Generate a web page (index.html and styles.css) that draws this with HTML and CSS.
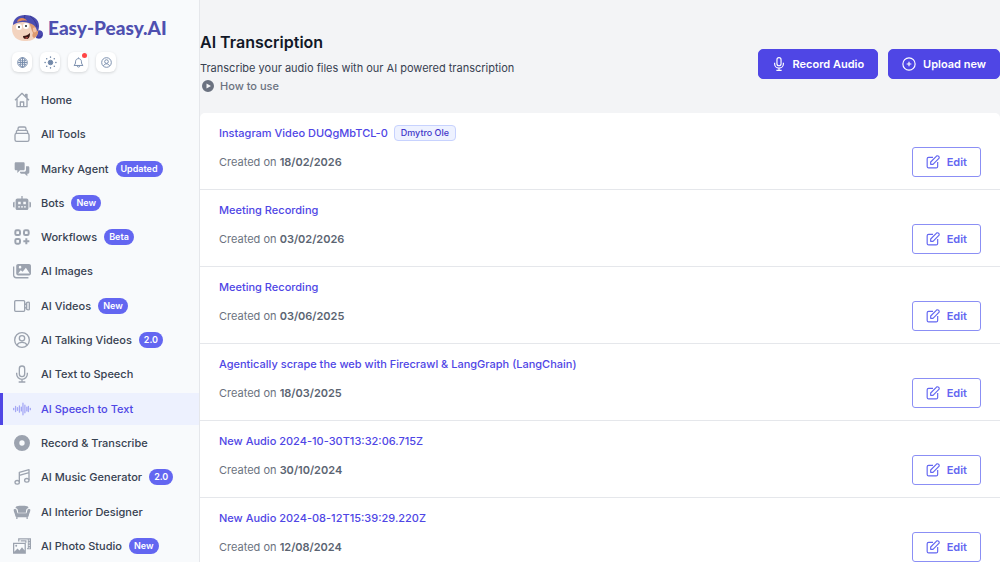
FILE: index.html
```html
<!DOCTYPE html>
<html lang="en">
<head>
  <meta charset="utf-8">
  <meta name="viewport" content="width=device-width, initial-scale=1">
  <title>AI Transcription</title>
  <link rel="stylesheet" href="styles.css">
</head>
<body>
  <div class="layout">
    <aside class="sidebar">
      <a class="logo" href="#">
        <svg class="logo-face" viewBox="0 0 32 28" aria-hidden="true">
          <path d="M24 17c4-2 7 0 7 3 0 4-3 6-7 4z" fill="#4a49b0"/>
          <path d="M25 23c2 1 4 0 5-2" stroke="#37358f" fill="none"/>
          <path d="M2 9C5 6 20 5 25 12c2 3 1 9-2 12-3 3-7 3-11 3C5 27 0 22 0 15c0-3 0-4 2-6z" fill="#f3d3bf"/>
          <path d="M17 9c4 0 8 2 9 5 1 5-1 9-4 10-2-1-2-3-1-5-2-3-2-7-4-10z" fill="#dd9a70"/>
          <path d="M21 14c3-2 5 0 4 2-1 3-3 3-4 1z" fill="#f6c2a2"/>
          <path d="M1 11C1 5 6 1 13 1c8 0 14 4 14 11 0 3-1 5-2 5-1-5-4-7-8-8C11 7 5 8 1 11z" fill="#4c4db1"/>
          <path d="M13 1c-1 2-1 4 0 6M18 2c3 2 6 6 7 11" stroke="#383991" fill="none"/>
          <path d="M5 8c1-5 8-5 10-1-3-1-7 0-10 1z" fill="#e58a55"/>
          <ellipse cx="7" cy="13" rx="3" ry="3" fill="#fff"/>
          <ellipse cx="14" cy="12" rx="3" ry="3" fill="#fff"/>
          <circle cx="7" cy="13" r="1" fill="#222"/>
          <circle cx="14" cy="12" r="1" fill="#222"/>
          <path d="M11 22c3 0 5-1 7-3 0 4-1 6-4 6-2 0-3-1-3-3z" fill="#3a1714"/>
          <path d="M13 24c1-1 3-1 3-1-1 2-2 2-3 1z" fill="#e5635c"/>
        </svg>
        <span>Easy-Peasy.AI</span>
      </a>

      <div class="tools">
        <button class="tool" type="button" aria-label="Language">
          <svg class="icon" viewBox="0 0 24 24"><circle cx="12" cy="12" r="10.500"/><ellipse cx="12" cy="12" rx="5" ry="10.500"/><path d="M12 2v20M2 12h20M4 7c4 2 12 2 16 0M4 17c4-2 12-2 16 0"/></svg>
        </button>
        <button class="tool" type="button" aria-label="Theme">
          <svg class="icon" viewBox="0 0 24 24"><circle cx="12" cy="12" r="5" fill="currentColor"/><path stroke-width="3" stroke-linecap="round" d="M12 0v.5M12 23.500v.5M0 12h.5M23.500 12h.5M3.600 3.600l.3.3M20.100 20.100l.3.3M3.600 20.400l.3-.3M20.100 3.900l.3-.3"/></svg>
        </button>
        <button class="tool" type="button" aria-label="Notifications">
          <svg class="icon" viewBox="0 0 24 24"><path d="M12 1v2M12 3.500c-4 0-6.500 3-6.500 7 0 4-1 6-3.500 8h20c-2.500-2-3.500-4-3.500-8 0-4-2.500-7-6.500-7zM9 19c0 4 6 4 6 0"/></svg>
          <span class="dot"></span>
        </button>
        <button class="tool" type="button" aria-label="Account">
          <svg class="icon" viewBox="0 0 24 24"><circle cx="12" cy="12" r="10.500"/><circle cx="12" cy="10" r="4"/><path d="M5.500 19c1.500-3 4-4 6.500-4s5 1 6.500 4"/></svg>
        </button>
      </div>

      <nav class="menu">
        <a class="item" href="#">
          <svg class="icon" viewBox="0 0 24 24"><path d="M1.500 12.500L12 2l10.500 10.500M4.500 10v12h15V10M9.500 22v-7h5v7M17.500 7V3.500h2V9"/></svg>
          Home
        </a>
        <a class="item" href="#">
          <svg class="icon" viewBox="0 0 24 24"><rect x="1.500" y="11" width="21" height="12" rx="2.500"/><path d="M3.500 11V9c0-1.500 1-2.500 2.500-2.500h12c1.500 0 2.500 1 2.500 2.500v2M6 6.500V4c0-1.500 1-2.500 2.500-2.500h7c1.500 0 2.500 1 2.500 2.500v2.500"/></svg>
          All Tools
        </a>
        <a class="item" href="#">
          <svg class="icon solid" viewBox="0 0 24 24"><path d="M3 2h11c1.200 0 2 .8 2 2v8c0 1.200-.8 2-2 2H9l-4 4v-4H3c-1.200 0-2-.8-2-2V4c0-1.200.8-2 2-2z"/><path d="M18 8h3c1.200 0 2 .8 2 2v7c0 1.200-.8 2-2 2h-1v4l-4-4h-5c-1.200 0-2-.8-2-2v-1h6c2 0 3-1 3-3z"/></svg>
          Marky Agent <span class="badge">Updated</span>
        </a>
        <a class="item" href="#">
          <svg class="icon solid" viewBox="0 0 28 24"><path fill-rule="evenodd" d="M13 1h2v4h6c1.700 0 3 1.300 3 3v12c0 1.700-1.300 3-3 3H7c-1.700 0-3-1.300-3-3V8c0-1.700 1.300-3 3-3h6zM8 10v4h4v-4zm8 0v4h4v-4zM8 17v2h3v-2zm4.500 0v2h3v-2zm4.500 0v2h3v-2z"/><path d="M0 12c0-1 1-2 2.500-2v9C1 19 0 18 0 17zM28 12c0-1-1-2-2.500-2v9c1.500 0 2.500-1 2.500-2z"/></svg>
          Bots <span class="badge">New</span>
        </a>
        <a class="item" href="#">
          <svg class="icon thick" viewBox="0 0 24 24"><rect x="2" y="2" width="7" height="7" rx="2"/><rect x="15" y="2" width="7" height="7" rx="2"/><rect x="2" y="15" width="7" height="7" rx="2"/><path d="M18.500 14v9M14 18.500h9"/></svg>
          Workflows <span class="badge">Beta</span>
        </a>
        <a class="item" href="#">
          <svg class="icon solid" viewBox="0 0 28 24"><path fill-rule="evenodd" d="M8 1h17c1.700 0 3 1.300 3 3v12c0 1.700-1.300 3-3 3H8c-1.700 0-3-1.300-3-3V4c0-1.700 1.300-3 3-3zm3 3a2 2 0 100 4 2 2 0 000-4zM8 16h18l-6-9-5 6-3-2z"/><path d="M0 5h2v13c0 2 1 3.500 3.500 3.500H24v2H5c-3 0-5-2-5-5z"/></svg>
          AI Images
        </a>
        <a class="item" href="#">
          <svg class="icon" viewBox="0 0 24 24"><rect x="1" y="4" width="15" height="16" rx="1.500"/><path d="M16 10l3-1.500V7c1-1 4-1 4 0v10c0 1-3 1-4 0v-1.500L16 14M19 8.500v7"/></svg>
          AI Videos <span class="badge">New</span>
        </a>
        <a class="item" href="#">
          <svg class="icon" viewBox="0 0 24 24"><circle cx="12" cy="12" r="11"/><circle cx="12" cy="9.500" r="4"/><path d="M4.500 19.500c1.500-3 4.500-4 7.500-4s6 1 7.500 4"/></svg>
          AI Talking Videos <span class="badge">2.0</span>
        </a>
        <a class="item" href="#">
          <svg class="icon" viewBox="0 0 24 24"><rect x="8" y="0" width="8" height="16" rx="4"/><path d="M4 10v2c0 4.500 3.500 8 8 8s8-3.500 8-8v-2M12 20v4M7 24h10"/></svg>
          AI Text to Speech
        </a>
        <a class="item active" href="#" aria-current="page">
          <svg class="icon" viewBox="0 0 28 24"><path stroke-width="2" stroke-linecap="round" d="M1 11v2M4 8v8M7 10v4M10 7v10M13 9v6M15.500 3v18M18.500 6v12M21.500 9v6M24 8v8M27 11v2"/></svg>
          AI Speech to Text
        </a>
        <a class="item" href="#">
          <svg class="icon solid" viewBox="0 0 24 24"><path fill-rule="evenodd" d="M12 0a12 12 0 100 24 12 12 0 000-24zm0 8a4 4 0 110 8 4 4 0 010-8z"/></svg>
          Record &amp; Transcribe
        </a>
        <a class="item" href="#">
          <svg class="icon" viewBox="0 0 24 24"><path d="M8 20V5l14.500-4v16M8 9.500l14.500-4"/><ellipse cx="4.800" cy="20" rx="3.300" ry="2.800"/><ellipse cx="19.200" cy="17" rx="3.300" ry="2.800"/></svg>
          AI Music Generator <span class="badge">2.0</span>
        </a>
        <a class="item" href="#">
          <svg class="icon solid" viewBox="0 0 28 24"><path d="M6 3c5-1 11-1 16 0 1.500.3 2 1.500 2 3-2 0-3 1-3.500 3L20 13H8L7.500 9C7 7 6 6 4 6c0-1.500.5-2.700 2-3z"/><path d="M1 9c0-2 4-2 4.500 0L7 14h14l1.500-5c.5-2 4.500-2 4.500 0 0 3-2 5-2.500 9-.2 1-.5 1.500-1.500 1.500V23h-2v-3H7v3H5v-3.500c-1 0-1.300-.5-1.500-1.500C3 14 1 12 1 9z"/></svg>
          AI Interior Designer
        </a>
        <a class="item" href="#">
          <svg class="icon solid" viewBox="0 0 28 24"><path fill-rule="evenodd" d="M0 7h20v17H0zm2 2v12l5-5 3 3 4-5 4 5V9zm3 1a1.500 1.500 0 100 3 1.500 1.500 0 000-3z"/><path fill-rule="evenodd" d="M8 0h20v17h-6v-2h1V2H10v3H8zm16.500 2v2H26V2zm0 4v2H26V6zm0 4v2H26v-2zm0 4v2H26v-2zM12 3h9v4h-2V5h-7z"/></svg>
          AI Photo Studio <span class="badge">New</span>
        </a>
      </nav>
    </aside>

    <main class="main">
      <header class="header">
        <div class="intro">
          <h1>AI Transcription</h1>
          <p>Transcribe your audio files with our AI powered transcription</p>
          <a class="how" href="#">
            <svg class="icon solid" viewBox="0 0 24 24"><path fill-rule="evenodd" d="M12 0a12 12 0 100 24 12 12 0 000-24zM9 7l9 5-9 5z"/></svg>
            How to use
          </a>
        </div>
        <div class="actions">
          <button class="btn" type="button">
            <svg class="icon" viewBox="0 0 24 24"><rect x="8.500" y="1" width="7" height="14" rx="3.500"/><path d="M4.500 10v2c0 4 3.300 7 7.500 7s7.500-3 7.500-7v-2M12 19v4M7.500 23h9"/></svg>
            Record Audio
          </button>
          <button class="btn" type="button">
            <svg class="icon" viewBox="0 0 24 24"><circle cx="12" cy="12" r="10.500"/><path d="M12 8v8M8 12h8"/></svg>
            Upload new
          </button>
        </div>
      </header>

      <ul class="list">
        <li class="row">
          <div class="info">
            <div class="title"><a href="#">Instagram Video DUQgMbTCL-0</a> <span class="tag">Dmytro Ole</span></div>
            <p>Created on <time>18/02/2026</time></p>
          </div>
          <button class="edit" type="button">
            <svg class="icon" viewBox="0 0 24 24"><path d="M12 4H4.500C3 4 2 5 2 6.500v13C2 21 3 22 4.500 22h13c1.500 0 2.500-1 2.500-2.500V12M8 16v-4L18.500 1.500c2-1 5 1.500 4 4L12 16z"/></svg>
            Edit
          </button>
        </li>
        <li class="row">
          <div class="info">
            <div class="title"><a href="#">Meeting Recording</a></div>
            <p>Created on <time>03/02/2026</time></p>
          </div>
          <button class="edit" type="button">
            <svg class="icon" viewBox="0 0 24 24"><path d="M12 4H4.500C3 4 2 5 2 6.500v13C2 21 3 22 4.500 22h13c1.500 0 2.500-1 2.500-2.500V12M8 16v-4L18.500 1.500c2-1 5 1.500 4 4L12 16z"/></svg>
            Edit
          </button>
        </li>
        <li class="row">
          <div class="info">
            <div class="title"><a href="#">Meeting Recording</a></div>
            <p>Created on <time>03/06/2025</time></p>
          </div>
          <button class="edit" type="button">
            <svg class="icon" viewBox="0 0 24 24"><path d="M12 4H4.500C3 4 2 5 2 6.500v13C2 21 3 22 4.500 22h13c1.500 0 2.500-1 2.500-2.500V12M8 16v-4L18.500 1.500c2-1 5 1.500 4 4L12 16z"/></svg>
            Edit
          </button>
        </li>
        <li class="row">
          <div class="info">
            <div class="title"><a href="#">Agentically scrape the web with Firecrawl &amp; LangGraph (LangChain)</a></div>
            <p>Created on <time>18/03/2025</time></p>
          </div>
          <button class="edit" type="button">
            <svg class="icon" viewBox="0 0 24 24"><path d="M12 4H4.500C3 4 2 5 2 6.500v13C2 21 3 22 4.500 22h13c1.500 0 2.500-1 2.500-2.500V12M8 16v-4L18.500 1.500c2-1 5 1.500 4 4L12 16z"/></svg>
            Edit
          </button>
        </li>
        <li class="row">
          <div class="info">
            <div class="title"><a href="#">New Audio 2024-10-30T13:32:06.715Z</a></div>
            <p>Created on <time>30/10/2024</time></p>
          </div>
          <button class="edit" type="button">
            <svg class="icon" viewBox="0 0 24 24"><path d="M12 4H4.500C3 4 2 5 2 6.500v13C2 21 3 22 4.500 22h13c1.500 0 2.500-1 2.500-2.500V12M8 16v-4L18.500 1.500c2-1 5 1.500 4 4L12 16z"/></svg>
            Edit
          </button>
        </li>
        <li class="row">
          <div class="info">
            <div class="title"><a href="#">New Audio 2024-08-12T15:39:29.220Z</a></div>
            <p>Created on <time>12/08/2024</time></p>
          </div>
          <button class="edit" type="button">
            <svg class="icon" viewBox="0 0 24 24"><path d="M12 4H4.500C3 4 2 5 2 6.500v13C2 21 3 22 4.500 22h13c1.500 0 2.500-1 2.500-2.500V12M8 16v-4L18.500 1.500c2-1 5 1.500 4 4L12 16z"/></svg>
            Edit
          </button>
        </li>
      </ul>
    </main>
  </div>
</body>
</html>
```
FILE: styles.css
```css
* {
  box-sizing: border-box;
}

body {
  margin: 0;
  font-family: Inter, "Liberation Sans", sans-serif;
  font-size: 11px;
  line-height: 16px;
  color: #374151;
  background-color: #f3f4f6;
}

h1, p, ul {
  margin: 0;
  padding: 0;
}

a {
  color: inherit;
  text-decoration: none;
}

button {
  font: inherit;
  cursor: pointer;
}

.layout {
  display: flex;
  height: 100vh;
}

/* sidebar */
.sidebar {
  display: flex;
  flex-direction: column;
  flex: none;
  width: 200px;
  background-color: #f8fafc;
  border-right: 1px solid #e5e7eb;
}

.logo {
  display: flex;
  align-items: center;
  gap: 4px;
  padding: 14px 12px 0;
  font-family: Lato, sans-serif;
  font-size: 19px;
  font-weight: 900;
  line-height: 28px;
  color: #4f50b0;
}

.logo-face {
  width: 32px;
  height: 28px;
}

.tools {
  display: flex;
  gap: 8px;
  padding: 10px 12px 12px;
}

.tool {
  position: relative;
  display: flex;
  align-items: center;
  justify-content: center;
  width: 20px;
  height: 20px;
  padding: 0;
  border: none;
  border-radius: 6px;
  background-color: #fff;
  color: #7288a8;
  box-shadow: 0 1px 3px rgba(0, 0, 0, 0.15);
}

.dot {
  position: absolute;
  top: 1px;
  right: 1px;
  width: 5px;
  height: 5px;
  border-radius: 50%;
  background-color: #ff4545;
}

.icon {
  flex: none;
  width: 16px;
  height: 16px;
  fill: none;
  stroke: currentColor;
  stroke-width: 2;
  stroke-linejoin: round;
  overflow: visible;
}

.icon.solid {
  fill: currentColor;
  stroke: none;
}

.icon.thick {
  stroke-width: 3;
}

.tool .icon {
  width: 11px;
  height: 11px;
}

.menu {
  display: flex;
  flex: 1;
  flex-direction: column;
  justify-content: space-between;
}

.item {
  display: flex;
  align-items: center;
  gap: 7px;
  height: 32px;
  padding-left: 10px;
  border-left: 3px solid transparent;
  font-weight: 500;
  white-space: nowrap;
}

.item .icon {
  width: 18px;
  height: 16px;
  margin-right: 3px;
  color: #9ca3af;
}

.item.active {
  border-color: #4f46e5;
  background-color: #edf1fe;
  color: #4f46e5;
}

.item.active .icon {
  color: #a5a8f5;
}

.badge {
  padding: 0 5px;
  border-radius: 8px;
  background-color: #6366f1;
  color: #fff;
  font-size: 9px;
  font-weight: 600;
}

/* content */
.main {
  flex: 1;
  min-width: 0;
  overflow: hidden;
}

.header {
  display: flex;
  align-items: center;
  justify-content: space-between;
  padding: 32px 0 17px;
}

.intro {
  padding-bottom: 2px;
}

h1 {
  font-size: 16px;
  font-weight: 600;
  line-height: 20px;
  color: #111827;
}

.intro p {
  margin-top: 8px;
}

.how {
  display: flex;
  align-items: center;
  gap: 6px;
  margin-top: 2px;
  padding-left: 2px;
  font-weight: 500;
  color: #6b7280;
}

.how .icon {
  width: 12px;
  height: 12px;
}

.actions {
  display: flex;
  gap: 10px;
}

.btn, .edit {
  display: flex;
  align-items: center;
  gap: 7px;
  height: 30px;
  padding: 0 13px;
  border: 1px solid #4f46e5;
  border-radius: 5px;
  background-color: #4f46e5;
  color: #fff;
  font-weight: 600;
}

.btn .icon {
  width: 14px;
  height: 14px;
}

.list {
  list-style: none;
  background-color: #fff;
  border-radius: 5px 5px 0 0;
}

.row {
  display: flex;
  align-items: flex-end;
  justify-content: space-between;
  padding: 12px 19px;
  border-bottom: 1px solid #e5e7eb;
}

.title {
  display: flex;
  align-items: center;
  gap: 6px;
  font-weight: 500;
  color: #4f46e5;
}

.info p {
  margin: 13px 0 7px;
  color: #6b7280;
}

time {
  font-weight: 600;
  color: #5b6472;
}

.tag {
  padding: 0 6px;
  border: 1px solid #c7d2fe;
  border-radius: 4px;
  background-color: #eef2ff;
  color: #4338ca;
  font-size: 9px;
  font-weight: 500;
  line-height: 14px;
}

.edit {
  border-color: #8b8ff5;
  border-radius: 3px;
  background-color: #fff;
  color: #6366f1;
}

.edit .icon {
  width: 14px;
  height: 14px;
}
```
